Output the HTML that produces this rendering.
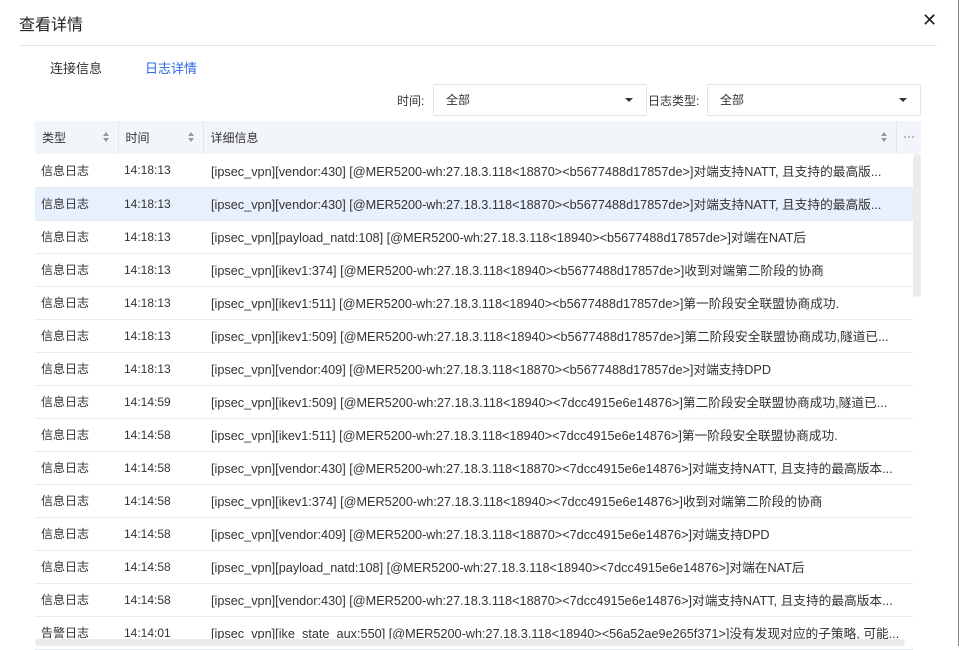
<!DOCTYPE html>
<html><head><meta charset="utf-8"><style>
*{margin:0;padding:0;box-sizing:border-box}
body{width:959px;height:646px;overflow:hidden;background:#fff;font-family:"Liberation Sans","Noto Sans CJK SC",sans-serif;color:#333;font-size:12px;position:relative}
.abs{position:absolute}
.title{left:19px;top:11px;font-size:16px;color:#222}
.close{left:922px;top:10px;font-size:18px;color:#222}
.div{left:19px;top:45px;width:918px;height:1px;background:#e4e4e4}
.tab{top:58px;font-size:13px}
.sel{top:84px;height:32px;border:1px solid #e2e2e2;border-radius:2px;padding:0 12px;line-height:30px}
.sel:after{content:"";position:absolute;right:13px;top:13px;border:4px solid transparent;border-top:4px solid #333;border-bottom:0}
table{position:absolute;left:35px;top:121px;width:878px;border-collapse:collapse;table-layout:fixed}
th{background:#f2f5fa;height:33px;text-align:left;font-weight:normal;padding-left:7px;border-right:1px solid #e3e7ee;position:relative;color:#333}
td{height:33px;padding-left:6px;border-bottom:1px solid #e8ebf0;white-space:nowrap;overflow:hidden;color:#333}
td.d{font-size:12.7px;padding-left:8px}
tr.hl td{background:#e8effd}
.sort{position:absolute;right:9px;top:11px;width:6px}
.sort:before{content:"";position:absolute;left:0;top:0;border:3px solid transparent;border-bottom:4px solid #999;border-top:0}
.sort:after{content:"";position:absolute;left:0;top:6px;border:3px solid transparent;border-top:4px solid #999;border-bottom:0}
.dot{position:absolute;top:136px;width:2px;height:2px;background:#aaa;border-radius:1px;z-index:2}
</style></head><body>
<div class="abs title">查看详情</div>
<div class="abs close">✕</div>
<div class="abs div"></div>
<div class="abs tab" style="left:50px">连接信息</div>
<div class="abs tab" style="left:145px;color:#2d6ae3">日志详情</div>
<div class="abs" style="left:397px;top:92px">时间:</div>
<div class="abs sel" style="left:433px;width:214px">全部</div>
<div class="abs" style="left:648px;top:92px">日志类型:</div>
<div class="abs sel" style="left:707px;width:214px">全部</div>
<div class="abs" style="left:35px;top:121px;width:886px;height:33px;background:#f2f5fa"></div>
<table>
<colgroup><col style="width:83px"><col style="width:85px"><col style="width:693px"><col style="width:17px"></colgroup>
<tr><th>类型<span class="sort"></span></th><th>时间<span class="sort"></span></th><th>详细信息<span class="sort"></span></th><th style="border:0"></th></tr>
<tr><td>信息日志</td><td>14:18:13</td><td class="d" colspan="2">[ipsec_vpn][vendor:430] [@MER5200-wh:27.18.3.118&lt;18870&gt;&lt;b5677488d17857de&gt;]对端支持NATT, 且支持的最高版...</td></tr>
<tr class="hl"><td>信息日志</td><td>14:18:13</td><td class="d" colspan="2">[ipsec_vpn][vendor:430] [@MER5200-wh:27.18.3.118&lt;18870&gt;&lt;b5677488d17857de&gt;]对端支持NATT, 且支持的最高版...</td></tr>
<tr><td>信息日志</td><td>14:18:13</td><td class="d" colspan="2">[ipsec_vpn][payload_natd:108] [@MER5200-wh:27.18.3.118&lt;18940&gt;&lt;b5677488d17857de&gt;]对端在NAT后</td></tr>
<tr><td>信息日志</td><td>14:18:13</td><td class="d" colspan="2">[ipsec_vpn][ikev1:374] [@MER5200-wh:27.18.3.118&lt;18940&gt;&lt;b5677488d17857de&gt;]收到对端第二阶段的协商</td></tr>
<tr><td>信息日志</td><td>14:18:13</td><td class="d" colspan="2">[ipsec_vpn][ikev1:511] [@MER5200-wh:27.18.3.118&lt;18940&gt;&lt;b5677488d17857de&gt;]第一阶段安全联盟协商成功.</td></tr>
<tr><td>信息日志</td><td>14:18:13</td><td class="d" colspan="2">[ipsec_vpn][ikev1:509] [@MER5200-wh:27.18.3.118&lt;18940&gt;&lt;b5677488d17857de&gt;]第二阶段安全联盟协商成功,隧道已...</td></tr>
<tr><td>信息日志</td><td>14:18:13</td><td class="d" colspan="2">[ipsec_vpn][vendor:409] [@MER5200-wh:27.18.3.118&lt;18870&gt;&lt;b5677488d17857de&gt;]对端支持DPD</td></tr>
<tr><td>信息日志</td><td>14:14:59</td><td class="d" colspan="2">[ipsec_vpn][ikev1:509] [@MER5200-wh:27.18.3.118&lt;18940&gt;&lt;7dcc4915e6e14876&gt;]第二阶段安全联盟协商成功,隧道已...</td></tr>
<tr><td>信息日志</td><td>14:14:58</td><td class="d" colspan="2">[ipsec_vpn][ikev1:511] [@MER5200-wh:27.18.3.118&lt;18940&gt;&lt;7dcc4915e6e14876&gt;]第一阶段安全联盟协商成功.</td></tr>
<tr><td>信息日志</td><td>14:14:58</td><td class="d" colspan="2">[ipsec_vpn][vendor:430] [@MER5200-wh:27.18.3.118&lt;18870&gt;&lt;7dcc4915e6e14876&gt;]对端支持NATT, 且支持的最高版本...</td></tr>
<tr><td>信息日志</td><td>14:14:58</td><td class="d" colspan="2">[ipsec_vpn][ikev1:374] [@MER5200-wh:27.18.3.118&lt;18940&gt;&lt;7dcc4915e6e14876&gt;]收到对端第二阶段的协商</td></tr>
<tr><td>信息日志</td><td>14:14:58</td><td class="d" colspan="2">[ipsec_vpn][vendor:409] [@MER5200-wh:27.18.3.118&lt;18870&gt;&lt;7dcc4915e6e14876&gt;]对端支持DPD</td></tr>
<tr><td>信息日志</td><td>14:14:58</td><td class="d" colspan="2">[ipsec_vpn][payload_natd:108] [@MER5200-wh:27.18.3.118&lt;18940&gt;&lt;7dcc4915e6e14876&gt;]对端在NAT后</td></tr>
<tr><td>信息日志</td><td>14:14:58</td><td class="d" colspan="2">[ipsec_vpn][vendor:430] [@MER5200-wh:27.18.3.118&lt;18870&gt;&lt;7dcc4915e6e14876&gt;]对端支持NATT, 且支持的最高版本...</td></tr>
<tr><td>告警日志</td><td>14:14:01</td><td class="d" colspan="2">[ipsec_vpn][ike_state_aux:550] [@MER5200-wh:27.18.3.118&lt;18940&gt;&lt;56a52ae9e265f371&gt;]没有发现对应的子策略, 可能...</td></tr>
</table>
<div class="abs" style="left:896px;top:121px;width:1px;height:33px;background:#e3e7ee;z-index:2"></div>
<div class="dot" style="left:904px"></div><div class="dot" style="left:908px"></div><div class="dot" style="left:912px"></div>
<div class="abs" style="left:913px;top:154px;width:8px;height:143px;background:#ebebeb;border-radius:4px"></div>
<div class="abs" style="left:35px;top:639px;width:870px;height:7px;background:#ebebeb;border-radius:4px"></div>
<div class="abs" style="left:958px;top:0;width:1px;height:646px;background:#888"></div>
</body></html>
